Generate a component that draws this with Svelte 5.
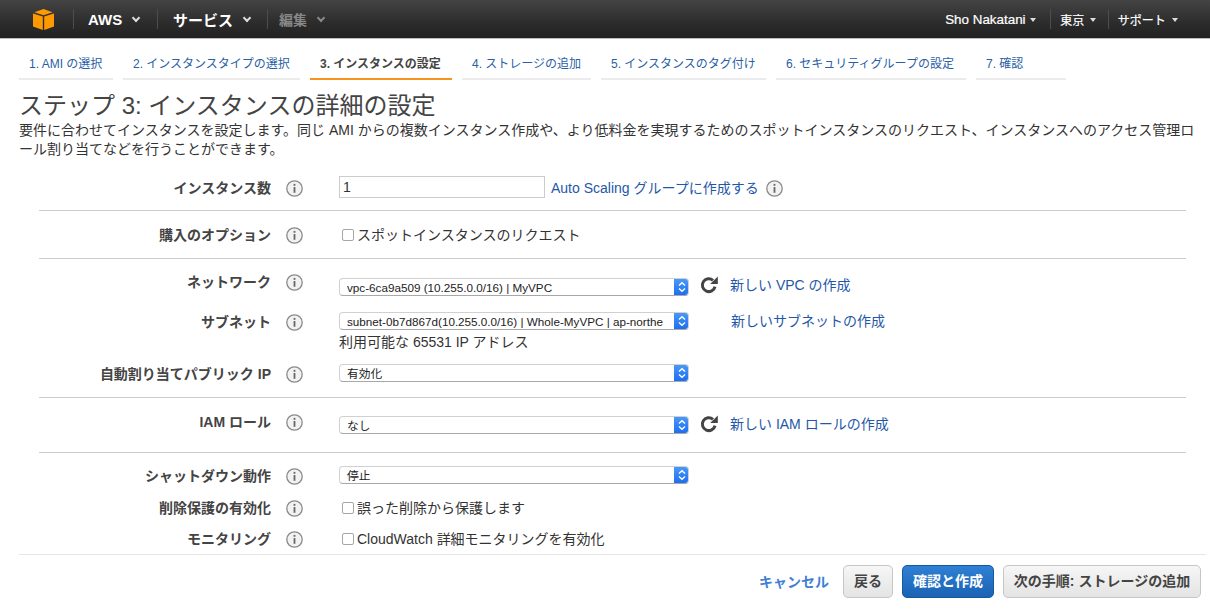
<script>
  const steps = [
    { label: '1. AMI の選択', w: 94 },
    { label: '2. インスタンスタイプの選択', w: 177 },
    { label: '3. インスタンスの設定', w: 142, active: true },
    { label: '4. ストレージの追加', w: 129 },
    { label: '5. インスタンスのタグ付け', w: 165 },
    { label: '6. セキュリティグループの設定', w: 190 },
    { label: '7. 確認', w: 90 }
  ];
</script>

{#snippet info()}
  <svg class="info" width="17" height="17" viewBox="0 0 17 17">
    <circle cx="8.5" cy="8.5" r="7.7" fill="#f2f2f2" stroke="#8a8a8a" stroke-width="1.3" />
    <rect x="7.6" y="7" width="1.8" height="5.8" fill="#666" />
    <rect x="7.6" y="3.9" width="1.8" height="1.9" fill="#666" />
  </svg>
{/snippet}

{#snippet refresh()}
  <svg class="refresh" width="18" height="18" viewBox="0 0 18 18">
    <path d="M15 10.6A6.4 6.4 0 1 1 13 4.4" fill="none" stroke="#444" stroke-width="3" />
    <path d="M10.2 8h7.6V.4z" fill="#444" />
  </svg>
{/snippet}

{#snippet select(text, cls = '')}
  <div class="select {cls}">
    <span class="select-text">{text}</span>
    <span class="select-arrow">
      <svg width="8" height="12" viewBox="0 0 8 12">
        <path d="M1 4.6 4 1.8l3 2.8M1 7.4l3 2.8 3-2.8" fill="none" stroke="#fff" stroke-width="1.4" />
      </svg>
    </span>
  </div>
{/snippet}

<div class="page">
  <header class="topbar">
    <div class="logo">
      <svg width="21" height="21" viewBox="0 0 21 21">
        <path d="M0 4.6 9.8 7.6V21L0 17.4z" fill="#f90" />
        <path d="M21 4.6 11.2 7.6V21L21 17.4z" fill="#f90" />
        <path d="M1.4 3.2 10.5 0l9.1 3.2-9.1 3z" fill="#f90" />
      </svg>
    </div>
    <div class="menu menu-big">AWS <i class="caret"></i></div>
    <div class="menu menu-big">サービス <i class="caret"></i></div>
    <div class="menu menu-big muted">編集 <i class="caret"></i></div>
    <div class="spacer"></div>
    <div class="menu small plain">Sho Nakatani <i class="caret tiny"></i></div>
    <div class="menu small region">東京 <i class="caret tiny"></i></div>
    <div class="menu small last">サポート <i class="caret tiny"></i></div>
  </header>

  <nav class="steps">
    {#each steps as step}
      <div class="step" class:active={step.active} style="width: {step.w}px">{step.label}</div>
    {/each}
  </nav>

  <main class="content">
    <h1>ステップ 3: インスタンスの詳細の設定</h1>
    <p class="desc">要件に合わせてインスタンスを設定します。同じ AMI からの複数インスタンス作成や、より低料金を実現するためのスポットインスタンスのリクエスト、インスタンスへのアクセス管理ロール割り当てなどを行うことができます。</p>

    <div class="form">
      <div class="row first">
        <div class="label">インスタンス数</div>
        {@render info()}
        <div class="control">
          <div class="input">1</div>
          <a class="link scaling">Auto Scaling グループに作成する</a>
          {@render info()}
        </div>
      </div>
      <hr class="hr-a" />
      <div class="row">
        <div class="label">購入のオプション</div>
        {@render info()}
        <label class="control check"><span class="box"></span>スポットインスタンスのリクエスト</label>
      </div>
      <hr class="hr-b" />
      <div class="row">
        <div class="label">ネットワーク</div>
        {@render info()}
        <div class="control net-ctrl">
          {@render select('vpc-6ca9a509 (10.255.0.0/16) | MyVPC', 'down')}
          {@render refresh()}
          <a class="link">新しい VPC の作成</a>
        </div>
      </div>
      <div class="row subnet">
        <div class="label">サブネット</div>
        {@render info()}
        <div class="control">
          {@render select('subnet-0b7d867d(10.255.0.0/16) | Whole-MyVPC | ap-northe')}
          <a class="link new-subnet">新しいサブネットの作成</a>
        </div>
      </div>
      <div class="avail">利用可能な 65531 IP アドレス</div>
      <div class="row public-ip">
        <div class="label">自動割り当てパブリック IP</div>
        {@render info()}
        <div class="control">{@render select('有効化')}</div>
      </div>
      <hr class="hr-c" />
      <div class="row">
        <div class="label">IAM ロール</div>
        {@render info()}
        <div class="control iam-ctrl">
          {@render select('なし', 'down-iam')}
          {@render refresh()}
          <a class="link">新しい IAM ロールの作成</a>
        </div>
      </div>
      <hr class="hr-d" />
      <div class="row">
        <div class="label">シャットダウン動作</div>
        {@render info()}
        <div class="control">{@render select('停止')}</div>
      </div>
      <div class="row gap-a">
        <div class="label">削除保護の有効化</div>
        {@render info()}
        <label class="control check"><span class="box"></span>誤った削除から保護します</label>
      </div>
      <div class="row gap-b">
        <div class="label">モニタリング</div>
        {@render info()}
        <label class="control check"><span class="box"></span>CloudWatch 詳細モニタリングを有効化</label>
      </div>
    </div>
  </main>

  <footer class="footer">
    <a class="cancel">キャンセル</a>
    <button class="btn back">戻る</button>
    <button class="btn primary">確認と作成</button>
    <button class="btn next">次の手順: ストレージの追加</button>
  </footer>
</div>

<style>
  :global(body) {
    margin: 0;
    background: #fff;
  }

  .page {
    width: 1210px;
    height: 610px;
    display: flex;
    flex-direction: column;
    overflow: hidden;
    font-family: "Liberation Sans", "Noto Sans CJK JP", sans-serif;
    font-size: 14px;
    color: #444;
  }

  /* top bar */
  .topbar {
    height: 38px;
    flex: none;
    display: flex;
    align-items: center;
    background: linear-gradient(#444 0%, #2c2c2c 60%, #222 100%);
    border-bottom: 1px solid #bdbdbd;
    color: #fff;
    padding-left: 33px;
  }
  .logo {
    width: 40px;
    height: 21px;
    flex: none;
  }
  .menu {
    display: flex;
    align-items: center;
    height: 20px;
    border-left: 1px solid #4d4d4d;
    font-weight: bold;
    white-space: pre;
  }
  .menu-big {
    font-size: 15px;
    padding: 0 11px 0 14px;
  }
  .menu-big:nth-child(2) { width: 84px; box-sizing: border-box; }
  .menu-big:nth-child(3) { width: 110px; box-sizing: border-box; padding-left: 15px; }
  .menu-big:nth-child(4) { padding-left: 11px; font-size: 14px; }
  .muted { color: #888; }
  .spacer { flex: 1; }
  .small {
    font-size: 12px;
    padding: 0 9px;
    font-weight: normal;
    -webkit-text-stroke: 0.2px #fff;
  }
  .plain { border-left: 0; padding-right: 14px; font-size: 13.4px; }
  .region { padding-right: 12px; }
  .last { padding-right: 32px; padding-left: 9px; }
  .caret {
    display: inline-block;
    box-sizing: border-box;
    width: 6px;
    height: 6px;
    margin: -3px 0 0 7px;
    border-right: 2px solid #ddd;
    border-bottom: 2px solid #ddd;
    transform: rotate(45deg);
  }
  .muted .caret { border-color: #888; }
  .caret.tiny {
    width: 0;
    height: 0;
    margin: 2px 0 0 5px;
    border: 3.5px solid transparent;
    border-top: 4px solid #ddd;
    border-bottom: 0;
    transform: none;
  }
  .plain .caret.tiny { margin-left: 1px; }
  .region .caret.tiny { margin-left: 2px; }
  .last .caret.tiny { margin-left: 3px; }

  /* wizard steps */
  .steps {
    flex: none;
    display: flex;
    gap: 10px;
    padding: 12px 0 0 19px;
    height: 29px;
  }
  .step {
    box-sizing: border-box;
    height: 29px;
    padding: 6px 0 0 10px;
    font-size: 12px;
    line-height: 15px;
    color: #2a5fa5;
    border-bottom: 2px solid #ebebeb;
    white-space: nowrap;
  }
  .step.active {
    color: #444;
    font-weight: bold;
    border-bottom-color: #f7941e;
  }

  /* main */
  .content {
    flex: 1;
    min-height: 0;
    overflow: hidden;
    padding: 13px 19px 0;
  }
  h1 {
    margin: 0;
    font-size: 24px;
    line-height: 26px;
    font-weight: normal;
    color: #444;
  }
  .desc {
    margin: 0 -12px 0 0;
    line-height: 19px;
    color: #333;
    padding-top: 2px;
    line-break: anywhere;
  }
  .form {
    margin: 0 5px 0 20px;
    padding-top: 17px;
  }
  hr {
    border: 0;
    border-top: 1px solid #ccc;
    margin: 0;
  }
  .hr-a { margin: 12px 0 12px; }
  .hr-b { margin: 13px 0 11px; }
  .hr-c { margin: 13px 0 12px; }
  .hr-d { margin: 20px 0 11px; }
  .row {
    display: flex;
    align-items: center;
    height: 22px;
  }
  .label {
    width: 232px;
    flex: none;
    text-align: right;
    font-weight: bold;
    color: #444;
    white-space: nowrap;
  }
  .row > :global(.info) {
    margin: 2px 0 0 15px;
    flex: none;
  }
  .control {
    margin-left: 36px;
    display: flex;
    align-items: center;
    color: #333;
    white-space: nowrap;
  }
  .control > :global(.info) { margin-top: 2px; }
  .net-ctrl { margin-top: 6px; }
  .net-ctrl > :global(.refresh) { margin-top: 2px; }
  .iam-ctrl { margin-top: 4px; }
  .iam-ctrl > :global(.refresh) { margin-top: 2px; }
  .input {
    box-sizing: border-box;
    width: 206px;
    height: 22px;
    line-height: 20px;
    padding-left: 3px;
    border: 1px solid #ccc;
    color: #333;
  }
  .link {
    color: #1f58a8;
    white-space: nowrap;
  }
  .scaling { margin: 0 7px 0 6px; }
  .check { gap: 3px; }
  .box {
    box-sizing: border-box;
    width: 12px;
    height: 12px;
    margin: 2px 0 0 3px;
    border: 1px solid #a6a6a6;
    border-radius: 2px;
    background: #fff;
    flex: none;
  }

  .select {
    position: relative;
    box-sizing: border-box;
    width: 350px;
    height: 18px;
    padding-left: 7px;
    line-height: 17px;
    font-size: 11.7px;
    color: #222;
    background: #fff;
    border: 1px solid #d0d0d0;
    border-bottom: 1px solid #a8a8a8;
    border-radius: 4px;
    overflow: hidden;
    white-space: nowrap;
  }
  .select.down { margin-top: 5px; }
  .select.down-iam { margin-top: 3px; }
  .select-text {
    display: block;
    width: 325px;
    overflow: hidden;
  }
  .select-arrow {
    position: absolute;
    top: -1px;
    right: -1px;
    bottom: -1px;
    width: 15px;
    display: flex;
    align-items: center;
    justify-content: center;
    background: linear-gradient(#4c9bf8, #1a6cf0);
  }
  :global(.refresh) {
    margin: 0 12px 0 11px;
    flex: none;
  }
  .new-subnet { margin-left: 42px; margin-top: -2px; }
  .subnet { margin-top: 18px; }
  .avail {
    margin: 0 0 0 300px;
    line-height: 20px;
    color: #333;
  }
  .public-ip { margin-top: 10px; }
  .gap-a { margin-top: 10px; }
  .gap-b { margin-top: 9px; }

  /* footer */
  .footer {
    flex: none;
    height: 56px;
    box-sizing: border-box;
    border-top: 1px solid #e6e6e6;
    margin: 0 4px 0 19px;
    background: #fff;
    display: flex;
    align-items: center;
    justify-content: flex-end;
    gap: 9px;
    padding: 0 5px 2px 0;
  }
  .cancel {
    color: #3f7fd6;
    font-weight: bold;
    margin-right: 5px;
    padding-bottom: 2px;
  }
  .btn {
    height: 33px;
    box-sizing: border-box;
    border: 1px solid #c6c6c6;
    border-radius: 5px;
    background: linear-gradient(#f6f6f6, #e4e4e4);
    font: bold 14px "Liberation Sans", "Noto Sans CJK JP", sans-serif;
    color: #444;
    padding: 0 0 3px;
  }
  .back { width: 50px; }
  .primary {
    width: 92px;
    color: #fff;
    border-color: #15589f;
    background: linear-gradient(#2f80d4, #1a62b4);
  }
  .next { width: 198px; }
</style>
